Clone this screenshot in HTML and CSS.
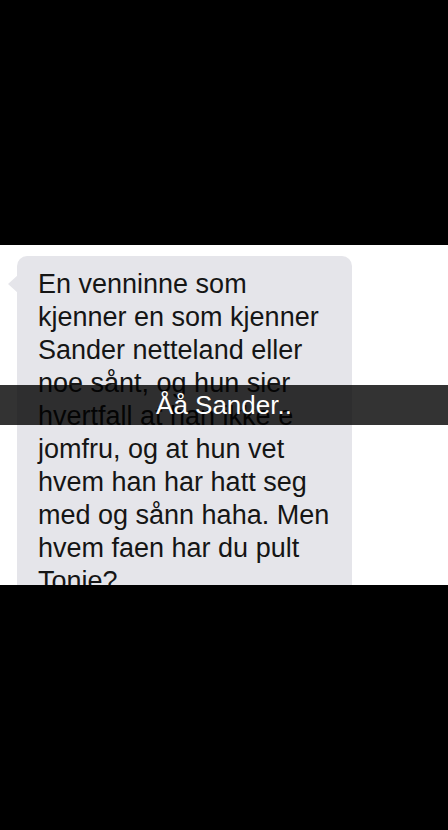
FILE: index.html
```html
<!DOCTYPE html>
<html lang="no">
<head>
<meta charset="utf-8">
<title>Snap</title>
<link rel="stylesheet" href="styles.css">
</head>
<body>
<div class="screen">
  <div class="band-top"></div>
  <div class="photo">
    <div class="bubble">
      <p class="msg">En venninne som<br>kjenner en som kjenner<br>Sander netteland eller<br>noe sånt, og hun sier<br>hvertfall at han ikke e<br>jomfru, og at hun vet<br>hvem han har hatt seg<br>med og sånn haha. Men<br>hvem faen har du pult<br>Tonje?</p>
    </div>
    <div class="caption">Åå Sander..</div>
  </div>
  <div class="band-bottom"></div>
</div>
</body>
</html>
```
FILE: styles.css
```css
html, body {
  margin: 0;
  padding: 0;
  background: #000;
}
.screen {
  width: 448px;
  height: 830px;
  display: flex;
  flex-direction: column;
  background: #000;
  overflow: hidden;
}
.band-top {
  height: 245px;
  flex: none;
}
.photo {
  position: relative;
  height: 340px;
  flex: none;
  background: #fff;
  overflow: hidden;
  padding: 11px 0 0 17px;
  box-sizing: border-box;
}
.bubble {
  position: relative;
  width: 335px;
  background: #e5e5ea;
  border-radius: 10px;
  padding: 12px 4px 20px 21px;
  box-sizing: border-box;
}
.bubble::before {
  content: "";
  position: absolute;
  left: -9px;
  top: 19px;
  width: 0;
  height: 0;
  border-top: 9px solid transparent;
  border-bottom: 9px solid transparent;
  border-right: 10px solid #e5e5ea;
}
.msg {
  margin: 0;
  font-family: "Liberation Sans", Arial, sans-serif;
  font-size: 27px;
  line-height: 33px;
  color: #151515;
  white-space: nowrap;
}
.caption {
  position: absolute;
  left: 0;
  right: 0;
  top: 140px;
  height: 40px;
  background: rgba(0, 0, 0, 0.8);
  color: #fff;
  text-align: center;
  font-family: "Liberation Sans", Arial, sans-serif;
  font-size: 26px;
  line-height: 40px;
}
.band-bottom {
  flex: 1;
}
```
